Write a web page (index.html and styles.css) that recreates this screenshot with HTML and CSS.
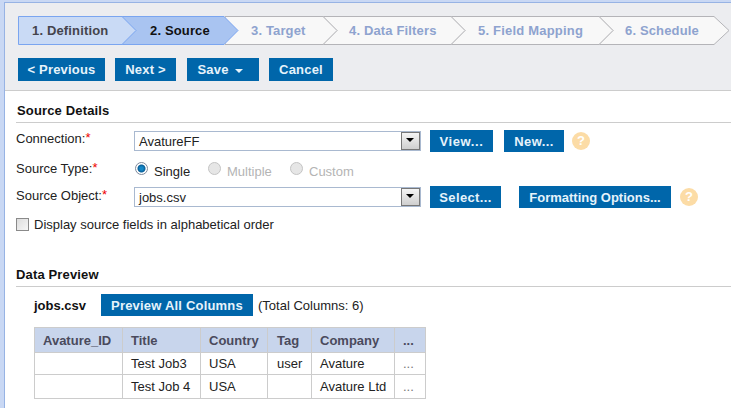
FILE: index.html
```html
<!DOCTYPE html>
<html lang="en">
<head>
<meta charset="utf-8">
<title>Source</title>
<link rel="stylesheet" href="styles.css">
</head>
<body>
<div class="app">
  <div class="frame">
  <header class="toolbar">
    <div class="stepper">
      <svg class="stepper-bg" width="713" height="29" viewBox="0 0 713 29">
        <g class="todo">
          <path d="M581 .5H696L711 14.5L696 28.5H581Z"/>
          <path class="edge" d="M581 .5L595 14.5L581 28.5"/>
          <path d="M433 .5H581L595 14.5L581 28.5H433Z"/>
          <path class="edge" d="M433 .5L447 14.5L433 28.5"/>
          <path d="M305 .5H433L447 14.5L433 28.5H305Z"/>
          <path class="edge" d="M305 .5L319 14.5L305 28.5"/>
          <path d="M207 .5H305L319 14.5L305 28.5H207Z"/>
        </g>
        <path class="current" d="M104 .5H206L220 14.5L206 28.5H104Z"/>
        <path class="done" d="M.5 .5H104L118 14.5L104 28.5H.5Z"/>
      </svg>
      <span class="step step-1 step-done">1. Definition</span>
      <span class="step step-2 step-current">2. Source</span>
      <span class="step step-3">3. Target</span>
      <span class="step step-4">4. Data Filters</span>
      <span class="step step-5">5. Field Mapping</span>
      <span class="step step-6">6. Schedule</span>
    </div>
    <div class="actions">
      <button class="btn w-prev">&lt; Previous</button>
      <button class="btn w-next">Next &gt;</button>
      <button class="btn w-save">Save <i class="caret"></i></button>
      <button class="btn w-cancel">Cancel</button>
    </div>
  </header>
  <main class="content">
    <h2 class="section-title">Source Details</h2>
    <div class="form-row row-conn">
      <label class="field-label">Connection:<em>*</em></label>
      <div class="select"><span>AvatureFF</span><b class="arrow"></b></div>
      <button class="btn btn-form w-view">View...</button>
      <button class="btn btn-form w-new">New...</button>
      <span class="help">?</span>
    </div>
    <div class="form-row row-type">
      <label class="field-label">Source Type:<em>*</em></label>
      <div class="radios">
        <span class="radio-item r-single"><i class="radio radio-on"></i>Single</span>
        <span class="radio-item r-multi off"><i class="radio"></i>Multiple</span>
        <span class="radio-item off"><i class="radio"></i>Custom</span>
      </div>
    </div>
    <div class="form-row row-obj">
      <label class="field-label">Source Object:<em>*</em></label>
      <div class="select"><span>jobs.csv</span><b class="arrow"></b></div>
      <button class="btn btn-form w-select">Select...</button>
      <button class="btn btn-form w-format">Formatting Options...</button>
      <span class="help">?</span>
    </div>
    <div class="check-row"><i class="checkbox"></i>Display source fields in alphabetical order</div>
    <h2 class="section-title preview-title">Data Preview</h2>
    <div class="preview">
      <div class="preview-head">
        <strong class="file-name">jobs.csv</strong>
        <button class="btn btn-form w-all">Preview All Columns</button>
        <span class="total">(Total Columns: 6)</span>
      </div>
      <table class="data">
        <thead>
          <tr><th class="c1">Avature_ID</th><th class="c2">Title</th><th class="c3">Country</th><th class="c4">Tag</th><th class="c5">Company</th><th class="c6">...</th></tr>
        </thead>
        <tbody>
          <tr class="row-a"><td></td><td>Test Job3</td><td>USA</td><td class="c4">user</td><td>Avature</td><td class="more">...</td></tr>
          <tr class="row-b"><td></td><td>Test Job 4</td><td>USA</td><td class="c4"></td><td>Avature Ltd</td><td class="more">...</td></tr>
        </tbody>
      </table>
    </div>
  </main>
  </div>
</div>
</body>
</html>
```
FILE: styles.css
```css
* { box-sizing: border-box; }
html, body { margin: 0; padding: 0; }
body {
  width: 731px;
  height: 408px;
  overflow: hidden;
  background: #fff;
  font-family: "Liberation Sans", Arial, sans-serif;
  font-size: 13px;
  color: #222;
}
.app {
  height: 408px;
  overflow: hidden;
  padding: 2px 0 0 4px;
  background: #c9d8f4;
}
.frame {
  height: 406px;
  background: #fff;
  border-top: 1px solid #97b3e4;
  border-left: 1px solid #97b3e4;
}
.toolbar {
  height: 88px;
  background: #ecedf0;
  border-bottom: 1px solid #ccc;
  padding: 13px 0 0 13px;
}
.stepper {
  position: relative;
  display: flex;
  width: 713px;
  height: 29px;
  font-weight: bold;
  font-size: 13px;
  letter-spacing: .15px;
  line-height: 29px;
  color: #8ea3cf;
}
.stepper-bg { position: absolute; left: 0; top: 0; }
.todo path { fill: #f8f8f8; stroke: #b4b4b8; }
.todo .edge { fill: none; stroke: #ccc; }
.current { fill: #a9c4f1; stroke: #7aa5f0; }
.done { fill: #c9daf5; stroke: #7aa5f0; }
.step { position: relative; display: block; white-space: nowrap; }
.step-done { color: #44444c; }
.step-current { color: #111; }
.step-1 { width: 118px; padding-left: 14px; }
.step-2 { width: 101px; padding-left: 14px; }
.step-3 { width: 98px; padding-left: 14px; }
.step-4 { width: 128px; padding-left: 14px; }
.step-5 { width: 148px; padding-left: 15px; letter-spacing: .2px; }
.step-6 { padding-left: 14px; }
.actions {
  display: flex;
  gap: 10px;
  margin-top: 13px;
}
.btn {
  display: block;
  height: 23px;
  padding: 0;
  border: 0;
  border-radius: 0;
  background: #0066aa;
  color: #e6f3fb;
  font: bold 13px "Liberation Sans", Arial, sans-serif;
  letter-spacing: .2px;
  text-align: center;
}
.w-prev { width: 87px; }
.w-next { width: 61px; }
.w-save { width: 72px; margin-left: 1px; padding-right: 5px; }
.w-cancel { width: 64px; }
.caret {
  display: inline-block;
  width: 0;
  height: 0;
  margin-left: 3px;
  vertical-align: 1px;
  border: 4px solid transparent;
  border-top-color: #e6f3fb;
  border-bottom: 0;
}
.content { padding: 0 0 0 11px; }
.section-title {
  margin: 0;
  height: 32px;
  padding: 12px 0 0 1px;
  border-bottom: 1px solid #ccc;
  font-size: 13px;
  letter-spacing: .15px;
  line-height: 15px;
  font-weight: bold;
  color: #111;
}
.form-row { display: flex; align-items: center; }
.row-conn { margin-top: 7px; height: 22px; }
.row-type { margin-top: 9px; height: 18px; }
.row-obj { margin-top: 7px; height: 22px; }
.field-label { width: 118px; color: #222; white-space: nowrap; position: relative; top: -3px; }
.row-type .field-label { top: -2px; }
.row-obj .field-label { top: -2px; }
.field-label em { color: #e00; font-style: normal; position: relative; top: -1px; }
.select {
  display: flex;
  justify-content: space-between;
  align-items: center;
  width: 287px;
  height: 20px;
  margin-right: 9px;
  padding: 0 0 0 4px;
  border: 1px solid #a9b9d0;
  background: #fff;
}
.arrow {
  position: relative;
  display: block;
  width: 19px;
  height: 18px;
  border: 1px solid #777;
  background: linear-gradient(#f4f4f4, #cfcfcf);
}
.arrow::after {
  content: "";
  position: absolute;
  left: 4px;
  top: 5px;
  border: 4px solid transparent;
  border-top: 4px solid #000;
  border-bottom: 0;
}
.btn-form { height: 22px; }
.w-view { width: 63px; margin-right: 11px; letter-spacing: .6px; }
.w-new { width: 60px; margin-right: 8px; letter-spacing: .4px; }
.w-select { width: 71px; margin-right: 18px; letter-spacing: .35px; }
.w-format { width: 152px; margin-right: 9px; letter-spacing: 0; }
.help {
  display: block;
  width: 18px;
  height: 18px;
  border-radius: 50%;
  background: #fcdca6;
  color: #fff;
  font-size: 13px;
  font-weight: bold;
  line-height: 18px;
  text-align: center;
}
.radios { display: flex; }
.radio-item { display: flex; align-items: center; white-space: nowrap; position: relative; top: 1px; }
.r-single { width: 73px; }
.r-multi { width: 82px; }
.off { color: #b4b4b4; }
.radio {
  display: block;
  width: 13px;
  height: 13px;
  margin: 0 6px 0 1px;
  position: relative;
  top: -3px;
  border-radius: 50%;
  border: 1px solid #c4c4c4;
  background: #e6e6e6;
}
.radio-on {
  border-color: #7e8a9c;
  background: radial-gradient(circle, #1488c8 0 1.5px, #0a5f98 3.5px, #fff 4.5px);
}
.check-row { display: flex; align-items: center; height: 14px; margin-top: 9px; white-space: nowrap; }
.checkbox {
  display: block;
  width: 13px;
  height: 13px;
  margin-right: 5px;
  border: 1px solid #8a8a8a;
  background: linear-gradient(135deg, #ddd, #f6f6f6);
}
.preview-title { margin-top: 25px; height: 31px; padding: 11px 0 0; }
.preview { padding: 7px 0 0 18px; }
.preview-head { display: flex; align-items: center; height: 22px; }
.file-name { width: 67px; color: #111; }
.w-all { width: 152px; margin-right: 5px; }
.total { white-space: nowrap; }
.data {
  margin-top: 11px;
  width: 391px;
  border-collapse: collapse;
  table-layout: fixed;
  border: 1px solid #ccc;
  font-size: 13px;
}
.data th, .data td {
  border: 1px solid #ccc;
  padding: 0 8px;
  text-align: left;
  white-space: nowrap;
  overflow: hidden;
}
.data th {
  height: 25px;
  background: #c8d5ec;
  color: #4a4a5c;
  font-weight: bold;
}
.data .row-a td { height: 22px; }
.data .row-b td { height: 24px; }
.data td { color: #222; }
.data td.more { color: #777; }
.c1 { width: 88px; }
.c2 { width: 78px; }
.c3 { width: 67px; }
.data .c4 { width: 44px; padding-left: 9px; }
.c5 { width: 83px; }
.c6 { width: 31px; }
```
